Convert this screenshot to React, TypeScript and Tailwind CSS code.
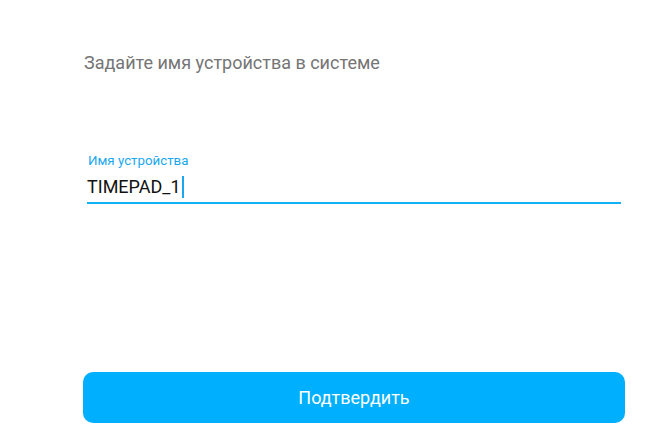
import React, { useState } from 'react';

const App: React.FC = () => {
  const [name, setName] = useState('TIMEPAD_1');

  return (
    <div className="w-[658px] h-[448px] bg-white flex flex-col font-['Roboto','Noto_Sans',sans-serif]">
      <p className="mt-[51px] ml-[84px] text-[18px] leading-[24px] text-[#757575]">
        Задайте имя устройства в системе
      </p>

      {/* Device name field */}
      <div className="mt-[78px] ml-[87px] w-[534px] flex flex-col">
        <label className="ml-[1px] text-[13.3px] leading-[16px] text-[#1aa7ef]">Имя устройства</label>
        <div className="mt-[5px] flex items-center h-[26px]">
          <span className="text-[18px] leading-[22px] text-[#111]">{name}</span>
          <span className="ml-[1px] w-[2px] h-[22px] bg-[#1aa7ef]" />
          <input
            className="hidden"
            value={name}
            onChange={e => setName(e.target.value)}
          />
        </div>
        <div className="mt-[2px] h-[2px] bg-[#12b0f5]" />
      </div>

      <button className="mt-[168px] ml-[83px] w-[542px] h-[51px] rounded-[10px] bg-[#00b0ff] text-white text-[18px]">
        Подтвердить
      </button>
    </div>
  );
};

export default App;
